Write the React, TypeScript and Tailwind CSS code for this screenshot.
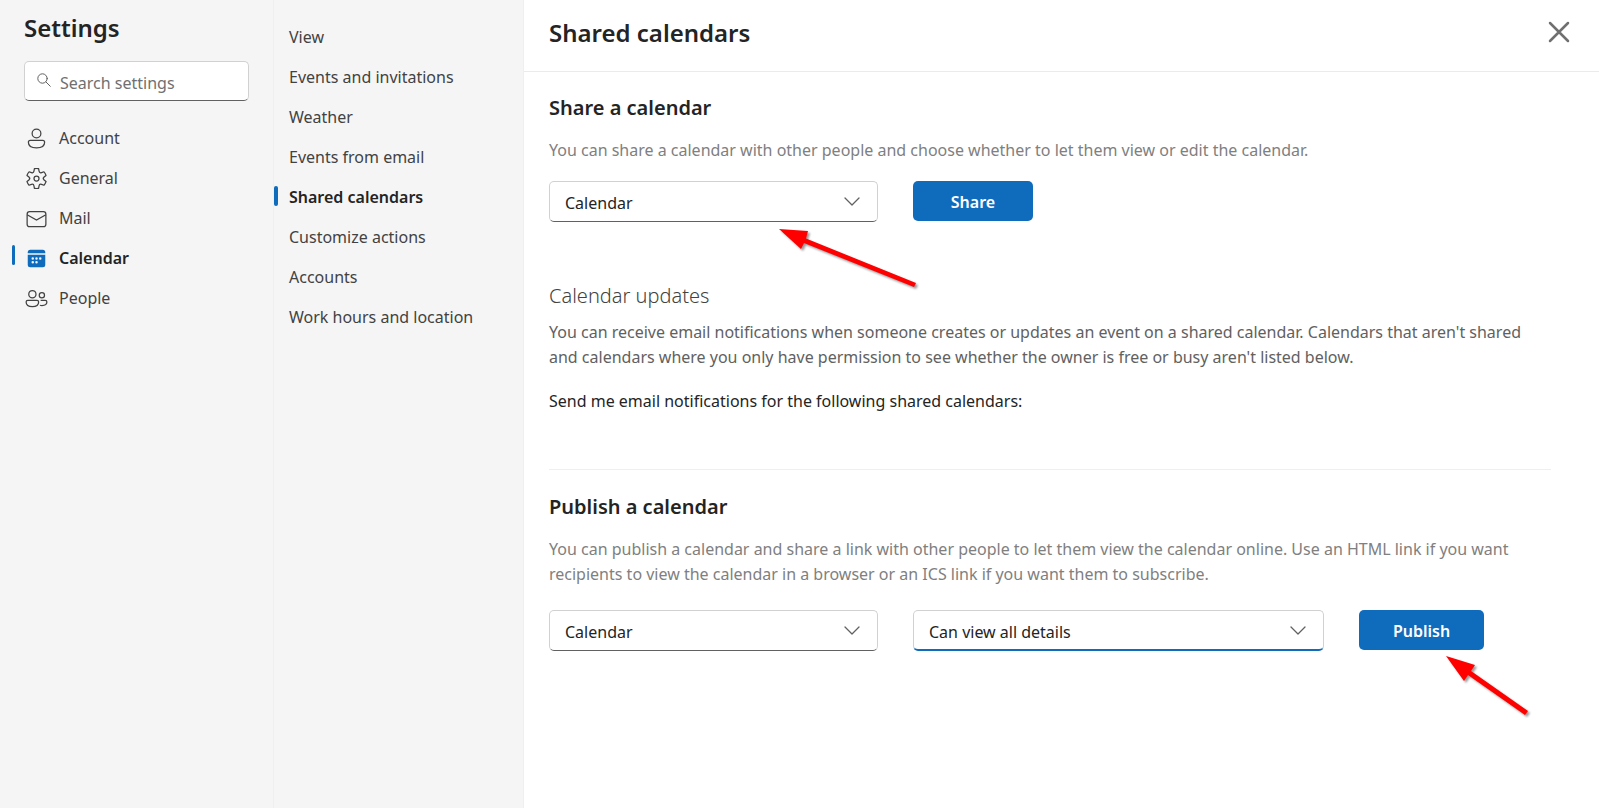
import type { ReactNode } from "react";

type IconName = "account" | "general" | "mail" | "calendar" | "people";

const mainNav: { label: string; icon: IconName }[] = [
  { label: "Account", icon: "account" },
  { label: "General", icon: "general" },
  { label: "Mail", icon: "mail" },
  { label: "Calendar", icon: "calendar" },
  { label: "People", icon: "people" },
];

const subNav = [
  "View",
  "Events and invitations",
  "Weather",
  "Events from email",
  "Shared calendars",
  "Customize actions",
  "Accounts",
  "Work hours and location",
];

const iconShapes: Record<IconName, ReactNode> = {
  account: (
    <>
      <circle cx="10" cy="6" r="3.5" />
      <path d="M5 11.5h10a1.5 1.5 0 0 1 1.5 1.5c0 3-2.9 4.5-6.5 4.5S3.5 16 3.5 13A1.5 1.5 0 0 1 5 11.5Z" />
    </>
  ),
  general: (
    <>
      <path
        fill="currentColor"
        stroke="none"
        fillRule="evenodd"
        d="M1.91 7.38A8.5 8.5 0 0 1 3.7 4.3a.5.5 0 0 1 .54-.13l1.92.68a1 1 0 0 0 1.32-.76l.36-2a.5.5 0 0 1 .4-.4 8.53 8.53 0 0 1 3.55 0c.2.04.35.2.38.4l.37 2a1 1 0 0 0 1.32.76l1.92-.68a.5.5 0 0 1 .54.13 8.5 8.5 0 0 1 1.78 3.08c.06.2 0 .4-.15.54l-1.56 1.32a1 1 0 0 0 0 1.52l1.56 1.32a.5.5 0 0 1 .15.54 8.5 8.5 0 0 1-1.78 3.08.5.5 0 0 1-.54.13l-1.92-.68a1 1 0 0 0-1.32.76l-.37 2a.5.5 0 0 1-.38.4 8.53 8.53 0 0 1-3.56 0 .5.5 0 0 1-.39-.4l-.36-2a1 1 0 0 0-1.32-.76l-1.92.68a.5.5 0 0 1-.54-.13 8.5 8.5 0 0 1-1.78-3.08.5.5 0 0 1 .15-.54l1.56-1.32a1 1 0 0 0 0-1.52L2.06 7.92a.5.5 0 0 1-.15-.54Zm1.06 0 1.3 1.1a2 2 0 0 1 0 3.04l-1.3 1.1c.3.79.72 1.51 1.25 2.16l1.6-.58a2 2 0 0 1 2.63 1.53l.3 1.67a7.56 7.56 0 0 0 2.5 0l.3-1.67a2 2 0 0 1 2.64-1.53l1.6.58a7.5 7.5 0 0 0 1.24-2.16l-1.3-1.1a2 2 0 0 1 0-3.04l1.3-1.1a7.5 7.5 0 0 0-1.25-2.16l-1.6.58a2 2 0 0 1-2.63-1.53l-.3-1.67a7.55 7.55 0 0 0-2.5 0l-.3 1.67A2 2 0 0 1 5.81 5.8l-1.6-.58a7.5 7.5 0 0 0-1.24 2.16Z"
      />
      <circle cx="10" cy="10" r="2" />
    </>
  ),
  mail: (
    <>
      <rect x="2.5" y="4.5" width="15" height="12" rx="2" />
      <path d="m2.5 7 7.5 4.3L17.5 7" />
    </>
  ),
  calendar: (
    <g fill="currentColor" stroke="none">
      <path d="M3 5.7V5a2 2 0 0 1 2-2h10a2 2 0 0 1 2 2v.7Z" />
      <path
        fillRule="evenodd"
        d="M3 6.9h14V15a2 2 0 0 1-2 2H5a2 2 0 0 1-2-2Zm4 2.1a1 1 0 1 0 0 2 1 1 0 0 0 0-2Zm3 0a1 1 0 1 0 0 2 1 1 0 0 0 0-2Zm3 0a1 1 0 1 0 0 2 1 1 0 0 0 0-2Zm-6 3a1 1 0 1 0 0 2 1 1 0 0 0 0-2Zm3 0a1 1 0 1 0 0 2 1 1 0 0 0 0-2Z"
      />
    </g>
  ),
  people: (
    <>
      <circle cx="6.7" cy="6.5" r="2.9" />
      <circle cx="14.3" cy="7.3" r="2.1" />
      <path d="M3 11.5h7.4a1.3 1.3 0 0 1 1.3 1.3c0 2.5-2.2 3.7-5 3.7s-5-1.2-5-3.7A1.3 1.3 0 0 1 3 11.5Z" />
      <path d="M13.3 11.5h3.7a1.3 1.3 0 0 1 1.3 1.3c0 1.9-1.8 2.8-4 2.8-.6 0-1.1-.1-1.6-.2" />
    </>
  ),
};

function NavIcon({ name }: { name: IconName }) {
  return (
    <svg
      viewBox="0 0 20 20"
      className="size-[25px] shrink-0"
      fill="none"
      stroke="currentColor"
      aria-hidden="true"
    >
      {iconShapes[name]}
    </svg>
  );
}

type SelectProps = {
  label: string;
  options: string[];
  className: string;
  focused?: boolean;
};

function Select({ label, options, className, focused }: SelectProps) {
  return (
    <div className={`relative ${className}`}>
      <select
        aria-label={label}
        className={`h-[41px] w-full appearance-none rounded-[5px] border border-[#d1d1d1] bg-white pl-[15px] pr-12 pt-1 text-[#242424] outline-none ${
          focused ? "border-b-2 border-b-[#0f6cbd]" : "border-b-[#616161]"
        }`}
      >
        {options.map((option) => (
          <option key={option}>{option}</option>
        ))}
      </select>
      <svg
        viewBox="0 0 16 10"
        className="pointer-events-none absolute right-[18px] top-4 h-[10px] w-4"
        fill="none"
        stroke="#616161"
        strokeWidth="1.3"
        strokeLinecap="round"
        strokeLinejoin="round"
        aria-hidden="true"
      >
        <path d="m1 1 7 7 7-7" />
      </svg>
    </div>
  );
}

export default function App() {
  return (
    <div className="flex min-h-screen bg-white font-['Noto_Sans','Segoe_UI',sans-serif] text-[16px] leading-[25px] text-[#242424]">
      <aside className="w-[274px] shrink-0 border-r border-[#efefef] bg-[#f5f5f5]">
        <h1 className="px-6 pt-3 text-[24px] font-semibold leading-8">Settings</h1>
        <div className="relative mx-6 mt-[17px]">
          <svg
            viewBox="0 0 14 14"
            className="absolute left-[13px] top-3 size-[14px]"
            fill="none"
            stroke="#616161"
            strokeLinecap="round"
            aria-hidden="true"
          >
            <circle cx="5.5" cy="5.5" r="4.7" />
            <path d="m9 9 4.3 4.3" />
          </svg>
          <input
            type="search"
            aria-label="Search settings"
            placeholder="Search settings"
            className="h-10 w-full rounded-[5px] border border-[#d1d1d1] border-b-[#616161] bg-white pl-[35px] pr-2 pt-1 outline-none placeholder:text-[#707070]"
          />
        </div>
        <nav className="mt-4">
          {mainNav.map(({ label, icon }) => {
            const active = label === "Calendar";
            return (
              <a
                key={label}
                href="#"
                className={`relative flex h-10 items-center gap-[10px] px-6 pt-0.5 ${
                  active ? "font-semibold text-[#242424]" : "text-[#424242]"
                }`}
              >
                {active && (
                  <span className="absolute left-3 top-2 h-5 w-[3px] rounded-sm bg-[#0f6cbd]" />
                )}
                <span className={active ? "text-[#0f6cbd]" : ""}>
                  <NavIcon name={icon} />
                </span>
                {label}
              </a>
            );
          })}
        </nav>
      </aside>

      <nav className="w-[250px] shrink-0 border-r border-[#efefef] bg-[#f5f5f5] pt-4">
        {subNav.map((label) => {
          const active = label === "Shared calendars";
          return (
            <a
              key={label}
              href="#"
              className={`relative flex h-10 items-center pl-[15px] pt-0.5 ${
                active ? "font-semibold text-[#242424]" : "text-[#424242]"
              }`}
            >
              {active && (
                <span className="absolute left-0 top-[10px] h-5 w-1 rounded-sm bg-[#0f6cbd]" />
              )}
              {label}
            </a>
          );
        })}
      </nav>

      <main className="min-w-0 flex-1">
        <header className="flex h-[72px] items-center justify-between border-b border-[#ebebeb] pb-2 pl-[25px] pr-[29px]">
          <h2 className="pt-0.5 text-[24px] font-semibold leading-8">Shared calendars</h2>
          <button type="button" aria-label="Close" className="text-[#707070]">
            <svg
              viewBox="0 0 22 22"
              className="size-[22px]"
              fill="none"
              stroke="currentColor"
              strokeWidth="2.5"
              strokeLinecap="round"
              aria-hidden="true"
            >
              <path d="m2 2 18 18M20 2 2 20" />
            </svg>
          </button>
        </header>

        <div className="pl-[25px] pr-12">
          <section className="pt-[22px]">
            <h3 className="text-[20px] font-semibold leading-7">Share a calendar</h3>
            <p className="mt-4 text-[#808080]">
              You can share a calendar with other people and choose whether to let them view or
              edit the calendar.
            </p>
            <div className="relative mt-[18px] flex items-start gap-[35px]">
              <Select
                label="Calendar to share"
                options={["Calendar"]}
                className="w-[329px]"
              />
              <button
                type="button"
                className="h-10 w-[120px] rounded-[5px] bg-[#0f6cbd] pt-0.5 font-semibold text-white"
              >
                Share
              </button>
              <svg
                viewBox="0 0 145 65"
                className="pointer-events-none absolute left-[230px] top-12 h-[65px] w-[145px] drop-shadow-[2px_2px_1px_rgba(0,0,0,0.4)]"
                fill="#fe0000"
                aria-hidden="true"
              >
                <path d="M0 0 29 2 27 9.500 137 54 135 58 25 14 22 20Z" />
              </svg>
            </div>
          </section>

          <section className="mt-[60px] border-b border-[#efefef] pb-[55px]">
            <h3 className="text-[20px] font-light leading-7 text-[#424242]">Calendar updates</h3>
            <p className="mt-[10px] text-[#616161]">
              You can receive email notifications when someone creates or updates an event on a
              shared calendar. Calendars that aren't shared and calendars where you only have
              permission to see whether the owner is free or busy aren't listed below.
            </p>
            <p className="mt-[19px]">
              Send me email notifications for the following shared calendars:
            </p>
          </section>

          <section className="pt-[23px]">
            <h3 className="text-[20px] font-semibold leading-7">Publish a calendar</h3>
            <p className="mt-4 text-[#808080]">
              You can publish a calendar and share a link with other people to let them view the
              calendar online. Use an HTML link if you want recipients to view the calendar in a
              browser or an ICS link if you want them to subscribe.
            </p>
            <div className="mt-[23px] flex items-start gap-[35px]">
              <Select
                label="Calendar to publish"
                options={["Calendar"]}
                className="w-[329px]"
              />
              <Select
                label="Permissions"
                options={["Can view all details"]}
                className="w-[411px]"
                focused
              />
              <div className="relative">
                <button
                  type="button"
                  className="h-10 w-[125px] rounded-[5px] bg-[#0f6cbd] pt-0.5 font-semibold text-white"
                >
                  Publish
                </button>
                <svg
                  viewBox="0 0 90 65"
                  className="pointer-events-none absolute left-[87px] top-[46px] h-[65px] w-[90px] drop-shadow-[2px_2px_1px_rgba(0,0,0,0.4)]"
                  fill="#fe0000"
                  aria-hidden="true"
                >
                  <path d="M0 0 29 9 25 15 82 55 79 59 22 19 18 25Z" />
                </svg>
              </div>
            </div>
          </section>
        </div>
      </main>
    </div>
  );
}
